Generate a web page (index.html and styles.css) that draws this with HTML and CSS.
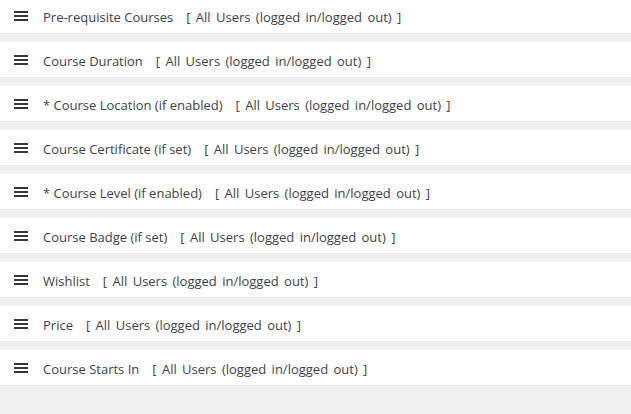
FILE: index.html
```html
<!DOCTYPE html>
<html>
<head>
<meta charset="utf-8">
<link rel="stylesheet" href="styles.css">
</head>
<body>
<ul class="list">
  <li class="row"><span class="handle"><i></i><i></i><i></i></span><span class="label">Pre-requisite Courses</span><span class="scope">[ All Users (logged in/logged out) ]</span></li>
  <li class="row"><span class="handle"><i></i><i></i><i></i></span><span class="label">Course Duration</span><span class="scope">[ All Users (logged in/logged out) ]</span></li>
  <li class="row"><span class="handle"><i></i><i></i><i></i></span><span class="label">* Course Location (if enabled)</span><span class="scope">[ All Users (logged in/logged out) ]</span></li>
  <li class="row"><span class="handle"><i></i><i></i><i></i></span><span class="label">Course Certificate (if set)</span><span class="scope">[ All Users (logged in/logged out) ]</span></li>
  <li class="row"><span class="handle"><i></i><i></i><i></i></span><span class="label">* Course Level (if enabled)</span><span class="scope">[ All Users (logged in/logged out) ]</span></li>
  <li class="row"><span class="handle"><i></i><i></i><i></i></span><span class="label">Course Badge (if set)</span><span class="scope">[ All Users (logged in/logged out) ]</span></li>
  <li class="row"><span class="handle"><i></i><i></i><i></i></span><span class="label">Wishlist</span><span class="scope">[ All Users (logged in/logged out) ]</span></li>
  <li class="row"><span class="handle"><i></i><i></i><i></i></span><span class="label">Price</span><span class="scope">[ All Users (logged in/logged out) ]</span></li>
  <li class="row"><span class="handle"><i></i><i></i><i></i></span><span class="label">Course Starts In</span><span class="scope">[ All Users (logged in/logged out) ]</span></li>
</ul>
</body>
</html>
```
FILE: styles.css
```css
html, body {
  margin: 0;
  padding: 0;
  background: #f0f0f0;
  font-family: "Open Sans", "Noto Sans", sans-serif;
  font-size: 13px;
  color: #3c434a;
}
.list {
  list-style: none;
  margin: -2px 0 0 0;
  padding: 0;
  display: flex;
  flex-direction: column;
  gap: 8px;
}
.row {
  height: 36px;
  background: #fff;
  display: flex;
  align-items: center;
  padding-left: 14px;
  box-sizing: border-box;
  border-bottom: 1px solid #e9e9e9;
}
.handle {
  width: 14px;
  display: flex;
  flex-direction: column;
  gap: 2px;
  margin-right: 15px;
}
.handle i {
  display: block;
  height: 2px;
  background: #383838;
}
.label {
  margin-right: 13px;
  padding-top: 2px;
}
.scope {
  white-space: nowrap;
  word-spacing: 2px;
  padding-top: 2px;
}
```
